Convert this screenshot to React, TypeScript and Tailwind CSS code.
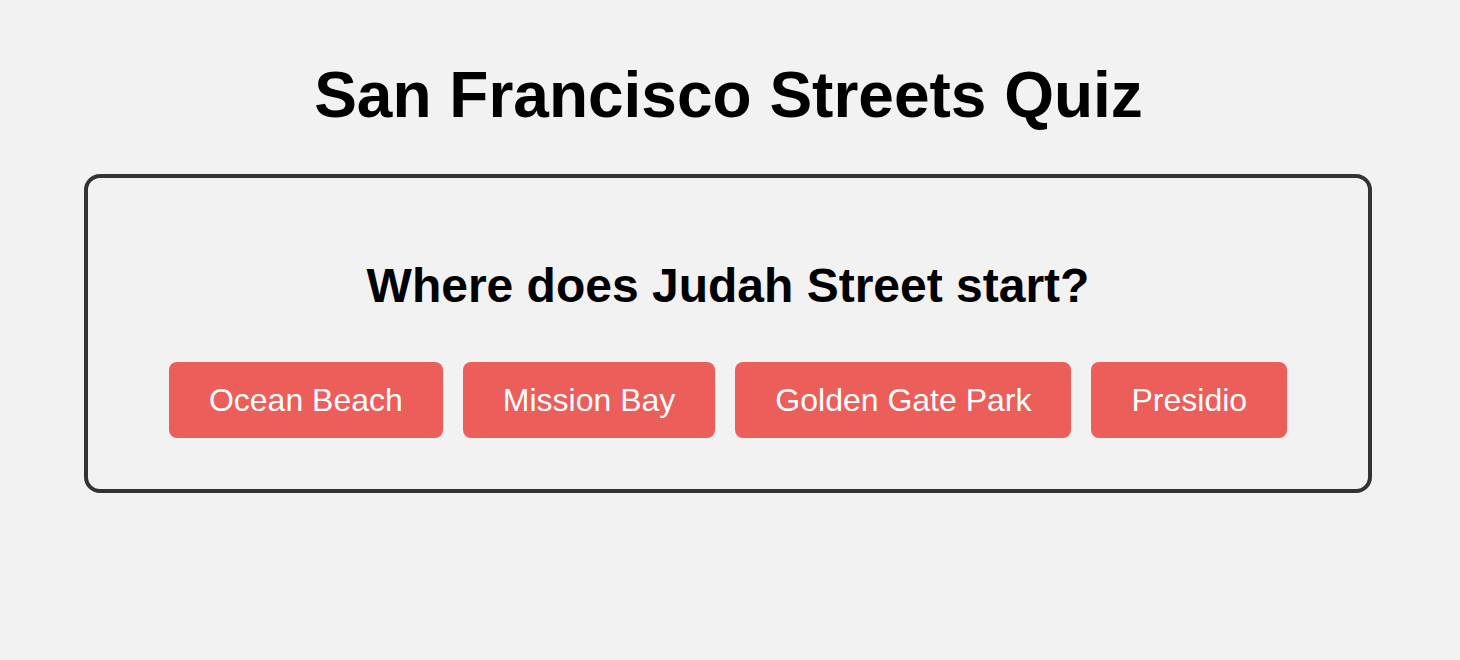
import React from 'react';

const options = ['Ocean Beach', 'Mission Bay', 'Golden Gate Park', 'Presidio'];

const App: React.FC = () => {
  return (
    <div className="min-h-screen w-full bg-[#f2f2f2] pt-[58px] font-['Liberation_Sans',Arial,sans-serif] text-black">
      <h1 className="text-center text-[64px] font-bold leading-[74px] pr-[3px]">
        San Francisco Streets Quiz
      </h1>

      <div className="ml-[84px] mt-[42px] w-[1288px] rounded-[16px] border-[4px] border-[#333333] px-10 pt-[80px] pb-[51px]">
        <h2 className="text-center text-[48px] font-bold leading-[55px]">
          Where does Judah Street start?
        </h2>

        <div className="mt-[49px] flex justify-center gap-5">
          {options.map((opt) => (
            <button
              key={opt}
              className="h-[76px] rounded-[8px] bg-[#eb5e59] px-10 text-[32px] leading-[37px] text-white"
            >
              {opt}
            </button>
          ))}
        </div>
      </div>
    </div>
  );
};

export default App;
